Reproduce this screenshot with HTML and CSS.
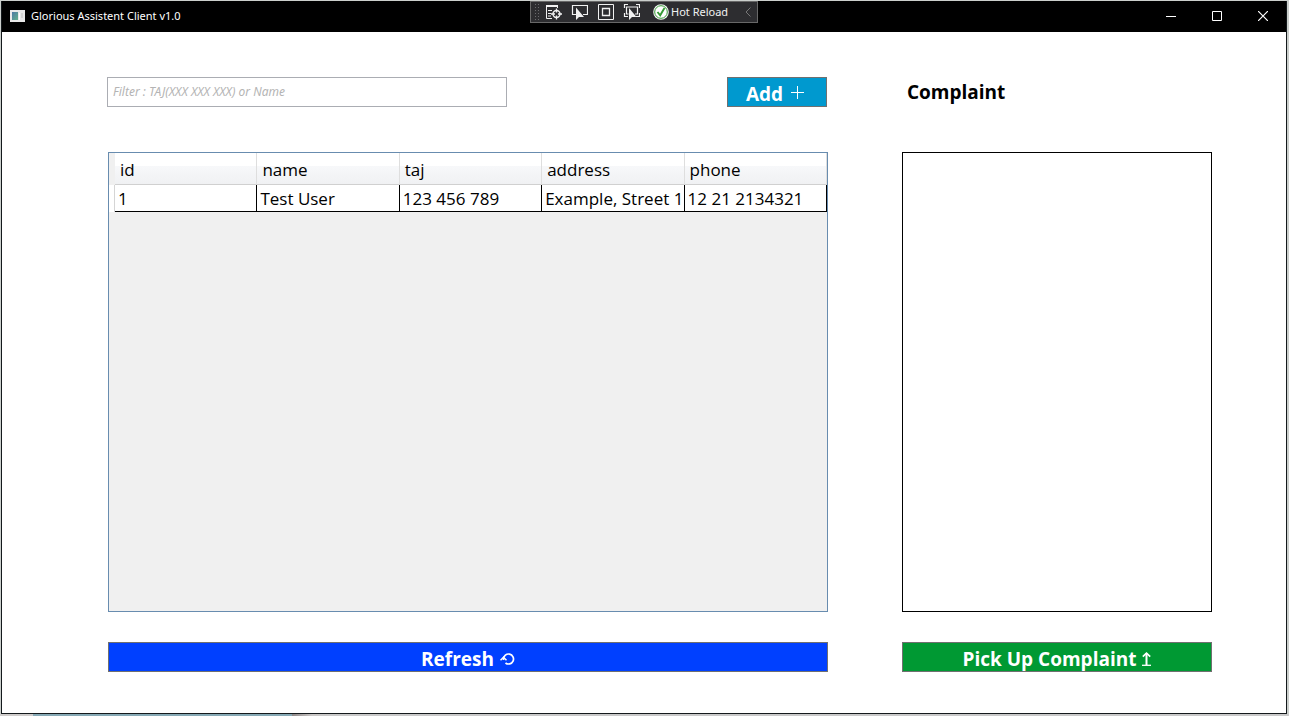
FILE: index.html
```html
<!DOCTYPE html>
<html lang="en">
<head>
<meta charset="utf-8">
<title>Glorious Assistent Client v1.0</title>
<link rel="stylesheet" href="styles.css">
</head>
<body class="desktop">
<div class="window">
  <header class="titlebar">
    <svg class="app-icon" width="15" height="12" viewBox="0 0 15 12" aria-hidden="true">
      <defs><linearGradient id="pane" x1="0" y1="0" x2="1" y2="1"><stop offset="0" stop-color="#4d79a5"/><stop offset="1" stop-color="#63b08c"/></linearGradient></defs>
      <rect width="15" height="12" fill="#e9e9e9"/>
      <rect x="2" y="2" width="6" height="8" fill="url(#pane)"/>
      <rect x="9" y="3" width="1" height="7" fill="#fff"/>
      <rect x="11" y="3" width="2" height="5" fill="#d4d4d4"/>
    </svg>
    <h1 class="window-title">Glorious Assistent Client v1.0</h1>
    <div class="window-controls">
      <button class="window-button" aria-label="Minimize"><svg width="10" height="10" viewBox="0 0 10 10"><path d="M0 5.5h10" stroke="#fff"/></svg></button>
      <button class="window-button" aria-label="Maximize"><svg width="10" height="10" viewBox="0 0 10 10"><path d="M.5.5h9v9h-9z" fill="none" stroke="#fff"/></svg></button>
      <button class="window-button" aria-label="Close"><svg width="10" height="10" viewBox="0 0 10 10"><path d="M0 0l10 10M10 0L0 10" stroke="#fff" stroke-width="1.2"/></svg></button>
    </div>
    <div class="debug-bar">
      <span class="grip"></span>
      <button class="debug-button" aria-label="Go to live visual tree"><svg width="17" height="16" viewBox="0 0 17 16" fill="none" stroke="#f1f1f1"><path d="M1 1.5h12M1 2.5h12" /><path d="M1.500 2v12.500H7M3 6.500h4M3 9.500h3M3 12h3M12.500 2v2"/><circle cx="11.500" cy="10" r="3.500" stroke-width="1.400"/><path d="M11.500 4.500v4M11.500 11.500v4M6 10h4M13 10h4" stroke-width="1.300"/></svg></button>
      <button class="debug-button" aria-label="Select element"><svg width="17" height="16" viewBox="0 0 17 16"><path d="M5 10.500H1.500v-9h15v9H12" fill="none" stroke="#f1f1f1" stroke-width="1.200"/><path d="M5 3.500V16l3-3h5z" fill="#f1f1f1"/></svg></button>
      <button class="debug-button" aria-label="Display layout adorners"><svg width="17" height="16" viewBox="0 0 17 16" fill="none" stroke="#f1f1f1"><path d="M1.500.5h15v15h-15z"/><path d="M5.500 4.500h7v7h-7z" stroke-width="1.300"/></svg></button>
      <button class="debug-button" aria-label="Track focused element"><svg width="17" height="16" viewBox="0 0 17 16"><path d="M1.500 4V.5H5M13 .5h3.500V4M1.500 9v3.500H5M16.500 9v3.500H13M5.500 10h-2V3h11v7H12" fill="none" stroke="#f1f1f1" stroke-width="1.200"/><path d="M6 4v12l3-3h4.500z" fill="#f1f1f1"/></svg></button>
      <button class="hot-reload"><svg width="16" height="16" viewBox="0 0 16 16"><circle cx="8" cy="8" r="7.800" fill="#f5f5f5"/><circle cx="8" cy="8" r="6.300" fill="#fff" stroke="#3a9c3a"/><path d="M4.500 8l2.700 3.300L11.500 4" fill="none" stroke="#339933" stroke-width="1.900"/></svg>Hot Reload</button>
      <button class="collapse" aria-label="Collapse"><svg width="6" height="10" viewBox="0 0 6 10"><path d="M5.500.5L1 5l4.500 4.500" fill="none" stroke="#777"/></svg></button>
    </div>
  </header>
  <main class="content">
    <div class="toolbar">
      <input class="filter" type="text" aria-label="Filter patients" placeholder="Filter : TAJ(XXX XXX XXX) or Name">
      <button class="button add">Add <svg class="plus" width="13" height="13" viewBox="0 0 13 13" aria-hidden="true"><path d="M6.500 0v13M0 6.500h13" stroke="#fff"/></svg></button>
    </div>
    <h2 class="complaint-title" id="complaint">Complaint</h2>
    <div class="data-grid">
      <table class="patients">
        <thead>
          <tr><td class="row-head"></td><th scope="col">id</th><th scope="col">name</th><th scope="col">taj</th><th scope="col">address</th><th scope="col">phone</th></tr>
        </thead>
        <tbody>
          <tr><td class="row-head"></td><td>1</td><td>Test User</td><td>123 456 789</td><td>Example, Street 1</td><td>12 21 2134321</td></tr>
        </tbody>
      </table>
    </div>
    <section class="complaint-box" aria-labelledby="complaint"></section>
    <button class="button refresh">Refresh <svg width="15" height="12" viewBox="0 0 15 12" aria-hidden="true"><path d="M3.500 7V6a5 5 0 1 1 2 4" fill="none" stroke="#fff" stroke-width="1.700"/><path d="M.5 7.200L3.500 4.200 6.500 7.200" fill="none" stroke="#fff" stroke-width="1.500"/></svg></button>
    <button class="button pick-up">Pick Up Complaint <svg width="9" height="14" viewBox="0 0 9 14" aria-hidden="true"><path d="M4.500 1v12" stroke="#fff" stroke-width="2"/><path d="M.8 4.700l3.700-3.500 3.700 3.500" fill="none" stroke="#fff" stroke-width="1.700"/><path d="M0 13.300h9" stroke="#fff" stroke-width="1.300"/></svg></button>
  </main>
</div>
</body>
</html>
```
FILE: styles.css
```css
* { box-sizing: border-box; }

.desktop {
  margin: 0;
  padding: 1px 2px 2px 1px;
  min-height: 100vh;
  display: flex;
  background: linear-gradient(90deg, #cfcccb 33px, #86a9b5 33px, #86a9b5 292px, #8e8888 292px, #c9c6c5 312px, #c9c9c9 332px) bottom / 100% 2px no-repeat #cbcfcc;
  font-family: "Open Sans", "Noto Sans", sans-serif;
  color: #000;
}

.window {
  flex: 1;
  display: flex;
  flex-direction: column;
  background: #fff;
  border: 1px solid #14191c;
  border-top: 0;
}

button {
  font: inherit;
  color: inherit;
  padding: 0;
  border: 0;
  background: none;
}

.titlebar {
  position: relative;
  display: flex;
  align-items: center;
  height: 31px;
  padding: 0 0 1px 8px;
  background: #000;
  color: #fff;
}

.window-title {
  margin: 0 0 0 6px;
  font-family: "Noto Sans", "Open Sans", sans-serif;
  font-size: 11px;
  line-height: 16px;
  font-weight: 400;
}

.window-controls { display: flex; margin-left: auto; }

.window-button {
  display: grid;
  place-items: center;
  width: 46px;
  height: 30px;
}

.debug-bar {
  position: absolute;
  top: 0;
  left: 50%;
  transform: translateX(-50%);
  display: flex;
  align-items: center;
  width: 228px;
  height: 22px;
  padding: 0 6px 0 3px;
  background: #2d2d30;
  border: 1px solid #686868;
}

.grip {
  width: 6px;
  height: 18px;
  background: radial-gradient(circle, #6a6a6d 1px, transparent 1px) 0 0 / 3px 3px;
}

.debug-button {
  display: grid;
  place-items: center;
  width: 26px;
  height: 20px;
}

.hot-reload {
  display: flex;
  align-items: center;
  gap: 2px;
  height: 20px;
  padding-left: 9px;
  font-family: "Noto Sans", "Open Sans", sans-serif;
  font-size: 11px;
  line-height: 16px;
  white-space: nowrap;
  color: #f1f1f1;
}

.collapse { display: flex; margin-left: auto; }

.content {
  flex: 1;
  display: grid;
  grid-template-columns: minmax(0, 720fr) minmax(0, 310fr);
  grid-template-rows: 30px minmax(0, 1fr) 30px;
  column-gap: 74px;
  padding: 45px 74px 41px 106px;
}

.toolbar {
  display: flex;
  justify-content: space-between;
  margin: 0 1px 0 -1px;
}

.filter {
  width: 400px;
  height: 30px;
  padding: 0 5px 2px;
  border: 1px solid #abadb3;
  font: italic 12px/16px "Noto Sans", "Open Sans", sans-serif;
}

.filter::placeholder { color: #b4b4b4; opacity: 1; }

.button {
  display: flex;
  align-items: center;
  justify-content: center;
  gap: 8px;
  height: 30px;
  padding-top: 3px;
  border: 1px solid #707070;
  color: #fff;
  font-size: 19px;
  line-height: 24px;
  font-weight: 700;
}

.add { width: 100px; padding-right: 4px; background: #0099cf; }
.plus { margin-bottom: 3px; }
.refresh { background: #0040ff; gap: 6px; }
.pick-up { background: #009933; gap: 6px; }

.complaint-title {
  margin: 0;
  padding-left: 5px;
  font-size: 19px;
  line-height: 30px;
  font-weight: 700;
}

.data-grid,
.complaint-box { margin: 45px 0 30px; }

.data-grid {
  background: #f0f0f0;
  border: 1px solid #688caf;
}

.complaint-box { border: 1px solid #000; }

.patients {
  width: 100%;
  table-layout: fixed;
  border-collapse: separate;
  border-spacing: 0;
  font-size: 17px;
  line-height: 24px;
  text-align: left;
  white-space: nowrap;
}

.patients .row-head {
  width: 6px;
  padding: 0;
  border: 0;
  border-right: 1px solid #d5d5d5;
}

.patients thead .row-head { background: #f0f0f0; border-right: 0; }
.patients tbody .row-head { background: #fff; }

.patients th {
  height: 32px;
  padding: 2px 0 0 5px;
  font-weight: 400;
  background: linear-gradient(#fff 13px, #f7f8fa 13px, #f0f1f3);
  border-right: 1px solid #dedede;
  border-bottom: 1px solid #d0d0d0;
}

.patients td {
  height: 27px;
  padding: 2px 0 0 3px;
  background: #fff;
  border-right: 1px solid #000;
  border-bottom: 1px solid #000;
}

.patients thead td { height: 32px; }
```
